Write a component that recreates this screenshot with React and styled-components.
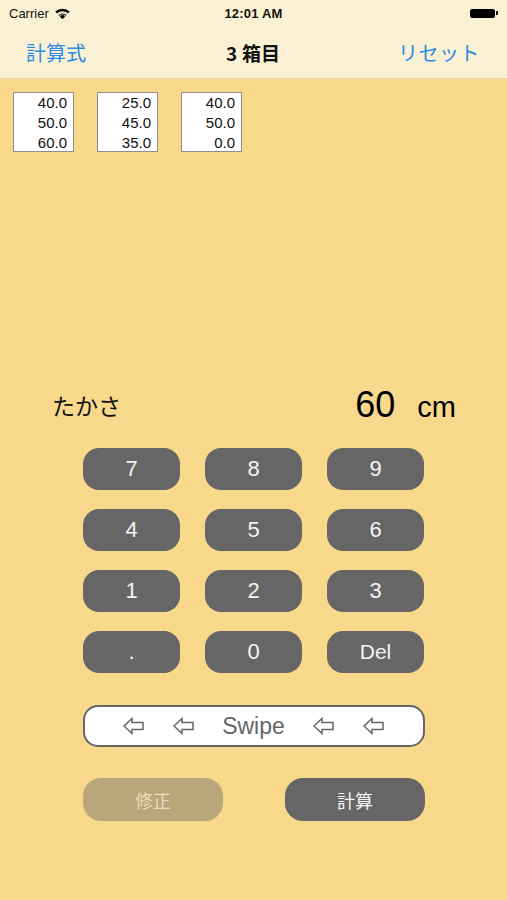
import React from "react";
import styled, { createGlobalStyle } from "styled-components";

const Global = createGlobalStyle`
  html, body { margin: 0; padding: 0; background: #F8D98B; }
  #root { width: 507px; height: 900px; }
`;

const Page = styled.div`
  width: 507px;
  height: 900px;
  background: #F8D98B;
  display: flex;
  flex-direction: column;
  font-family: "Liberation Sans", "Noto Sans CJK JP", sans-serif;
  overflow: hidden;
`;

const Header = styled.header`
  background: #FAF1D4;
  border-bottom: 1px solid #E9D8A6;
  display: flex;
  flex-direction: column;
`;

const StatusBar = styled.div`
  height: 26px;
  display: grid;
  grid-template-columns: 1fr auto 1fr;
  align-items: center;
  padding: 0 9px;
  font-size: 13px;
  color: #111;
`;

const StatusLeft = styled.div`
  display: flex;
  align-items: center;
  gap: 6px;
`;

const Time = styled.div`
  font-weight: bold;
  letter-spacing: 0.2px;
`;

const StatusRight = styled.div`
  display: flex;
  justify-content: flex-end;
  align-items: center;
`;

const Battery = styled.div`
  display: flex;
  align-items: center;
  gap: 1px;
`;
const BatteryBody = styled.div`
  width: 25px;
  height: 9px;
  border-radius: 2px;
  background: #000;
`;
const BatteryNub = styled.div`
  width: 2px;
  height: 4px;
  border-radius: 0 1px 1px 0;
  background: #000;
`;

const NavBar = styled.nav`
  height: 52px;
  display: grid;
  grid-template-columns: 1fr auto 1fr;
  align-items: center;
  padding: 0 27px 0 26px;
  font-family: "Noto Sans CJK JP", "Liberation Sans", sans-serif;
`;

const NavButton = styled.div`
  color: #2E8BE2;
  font-size: 20px;
  justify-self: ${(p) => (p.$right ? "end" : "start")};
  letter-spacing: ${(p) => (p.$right ? "0.5px" : "0")};
`;

const NavTitle = styled.div`
  color: #111;
  font-size: 19px;
  font-weight: bold;
  display: flex;
  gap: 5px;
  align-items: center;
`;

const Main = styled.main`
  flex: 1;
  display: flex;
  flex-direction: column;
  padding-top: 13px;
`;

const Boxes = styled.div`
  display: flex;
  gap: 23px;
  padding-left: 13px;
`;

const Box = styled.div`
  width: 61px;
  height: 60px;
  box-sizing: border-box;
  background: #fff;
  border: 1px solid #8E8E8E;
  display: flex;
  flex-direction: column;
  align-items: flex-end;
  padding: 0 6px 0 0;
  font-size: 15px;
  line-height: 20px;
  color: #111;
`;

const ReadRow = styled.div`
  margin-top: 232px;
  height: 42px;
  display: flex;
  align-items: center;
  justify-content: space-between;
  padding: 0 51px 0 52px;
`;

const Label = styled.div`
  font-family: "Noto Sans CJK JP", sans-serif;
  font-size: 23px;
  color: #111;
`;

const Value = styled.div`
  display: flex;
  align-items: baseline;
  gap: 22px;
  color: #000;
`;

const Number = styled.span`
  font-size: 36px;
`;

const Unit = styled.span`
  font-size: 29px;
`;

const Keypad = styled.div`
  margin-top: 22px;
  display: grid;
  grid-template-columns: repeat(3, 97px);
  grid-auto-rows: 42px;
  column-gap: 25px;
  row-gap: 19px;
  justify-content: center;
`;

const Key = styled.div`
  background: #666666;
  border-radius: 16px;
  color: #F4F4F4;
  font-size: ${(p) => (p.$small ? "21px" : "22px")};
  display: flex;
  align-items: center;
  justify-content: center;
`;

const Swipe = styled.div`
  margin: 32px auto 0;
  width: 338px;
  height: 38px;
  border: 2px solid #666;
  border-radius: 15px;
  background: #fff;
  display: flex;
  align-items: center;
  justify-content: center;
  gap: 28px;
  color: #666;
`;

const SwipeText = styled.span`
  font-size: 23px;
`;

const ArrowGroup = styled.span`
  display: flex;
  align-items: center;
  gap: 29px;
`;

const Actions = styled.div`
  margin-top: 31px;
  display: flex;
  justify-content: space-between;
  padding: 0 82px 0 83px;
`;

const ActionButton = styled.div`
  width: 140px;
  height: 43px;
  border-radius: 18px;
  background: ${(p) => (p.$disabled ? "#B9A67B" : "#666666")};
  color: ${(p) => (p.$disabled ? "#E8DCBD" : "#F6F6F6")};
  font-family: "Noto Sans CJK JP", sans-serif;
  font-size: 18px;
  display: flex;
  align-items: center;
  justify-content: center;
`;

const Wifi = () => (
  <svg width="15" height="11" viewBox="0 0 15 11">
    <path d="M7.5 11 L0.3 3.6 A10.5 10.5 0 0 1 14.7 3.6 Z" fill="#000" />
    <path d="M7.5 11 L2.0 5.4 A7.8 7.8 0 0 1 13 5.4 L12.2 6.2 A6.6 6.6 0 0 0 2.8 6.2 Z" fill="#FAF1D4" />
    <path d="M7.5 11 L2.6 6 A7 7 0 0 1 12.4 6 Z" fill="#FAF1D4" />
    <path d="M7.5 11 L3.6 7 A5.5 5.5 0 0 1 11.4 7 Z" fill="#000" />
    <path d="M7.5 11 L4.4 7.8 A4.4 4.4 0 0 1 10.6 7.8 Z" fill="#FAF1D4" />
    <path d="M7.5 11 L5 8.4 A3.5 3.5 0 0 1 10 8.4 Z" fill="#000" />
  </svg>
);

const Arrow = () => (
  <svg width="21" height="18" viewBox="0 0 21 18">
    <path
      d="M1 9 L9 1.5 L9 5.5 L20 5.5 L20 12.5 L9 12.5 L9 16.5 Z"
      fill="none"
      stroke="#666"
      strokeWidth="1.5"
      strokeLinejoin="miter"
    />
  </svg>
);

const boxes = [
  ["40.0", "50.0", "60.0"],
  ["25.0", "45.0", "35.0"],
  ["40.0", "50.0", "0.0"],
];

const keys = ["7", "8", "9", "4", "5", "6", "1", "2", "3", ".", "0", "Del"];

export default function App() {
  return (
    <Page>
      <Global />
      <Header>
        <StatusBar>
          <StatusLeft>
            <span>Carrier</span>
            <Wifi />
          </StatusLeft>
          <Time>12:01 AM</Time>
          <StatusRight>
            <Battery>
              <BatteryBody />
              <BatteryNub />
            </Battery>
          </StatusRight>
        </StatusBar>
        <NavBar>
          <NavButton>計算式</NavButton>
          <NavTitle>
            <span>3</span>
            <span>箱目</span>
          </NavTitle>
          <NavButton $right>リセット</NavButton>
        </NavBar>
      </Header>
      <Main>
        <Boxes>
          {boxes.map((b, i) => (
            <Box key={i}>
              {b.map((v, j) => (
                <span key={j}>{v}</span>
              ))}
            </Box>
          ))}
        </Boxes>
        <ReadRow>
          <Label>たかさ</Label>
          <Value>
            <Number>60</Number>
            <Unit>cm</Unit>
          </Value>
        </ReadRow>
        <Keypad>
          {keys.map((k) => (
            <Key key={k} $small={k === "Del"}>
              {k}
            </Key>
          ))}
        </Keypad>
        <Swipe>
          <ArrowGroup>
            <Arrow />
            <Arrow />
          </ArrowGroup>
          <SwipeText>Swipe</SwipeText>
          <ArrowGroup>
            <Arrow />
            <Arrow />
          </ArrowGroup>
        </Swipe>
        <Actions>
          <ActionButton $disabled>修正</ActionButton>
          <ActionButton>計算</ActionButton>
        </Actions>
      </Main>
    </Page>
  );
}
